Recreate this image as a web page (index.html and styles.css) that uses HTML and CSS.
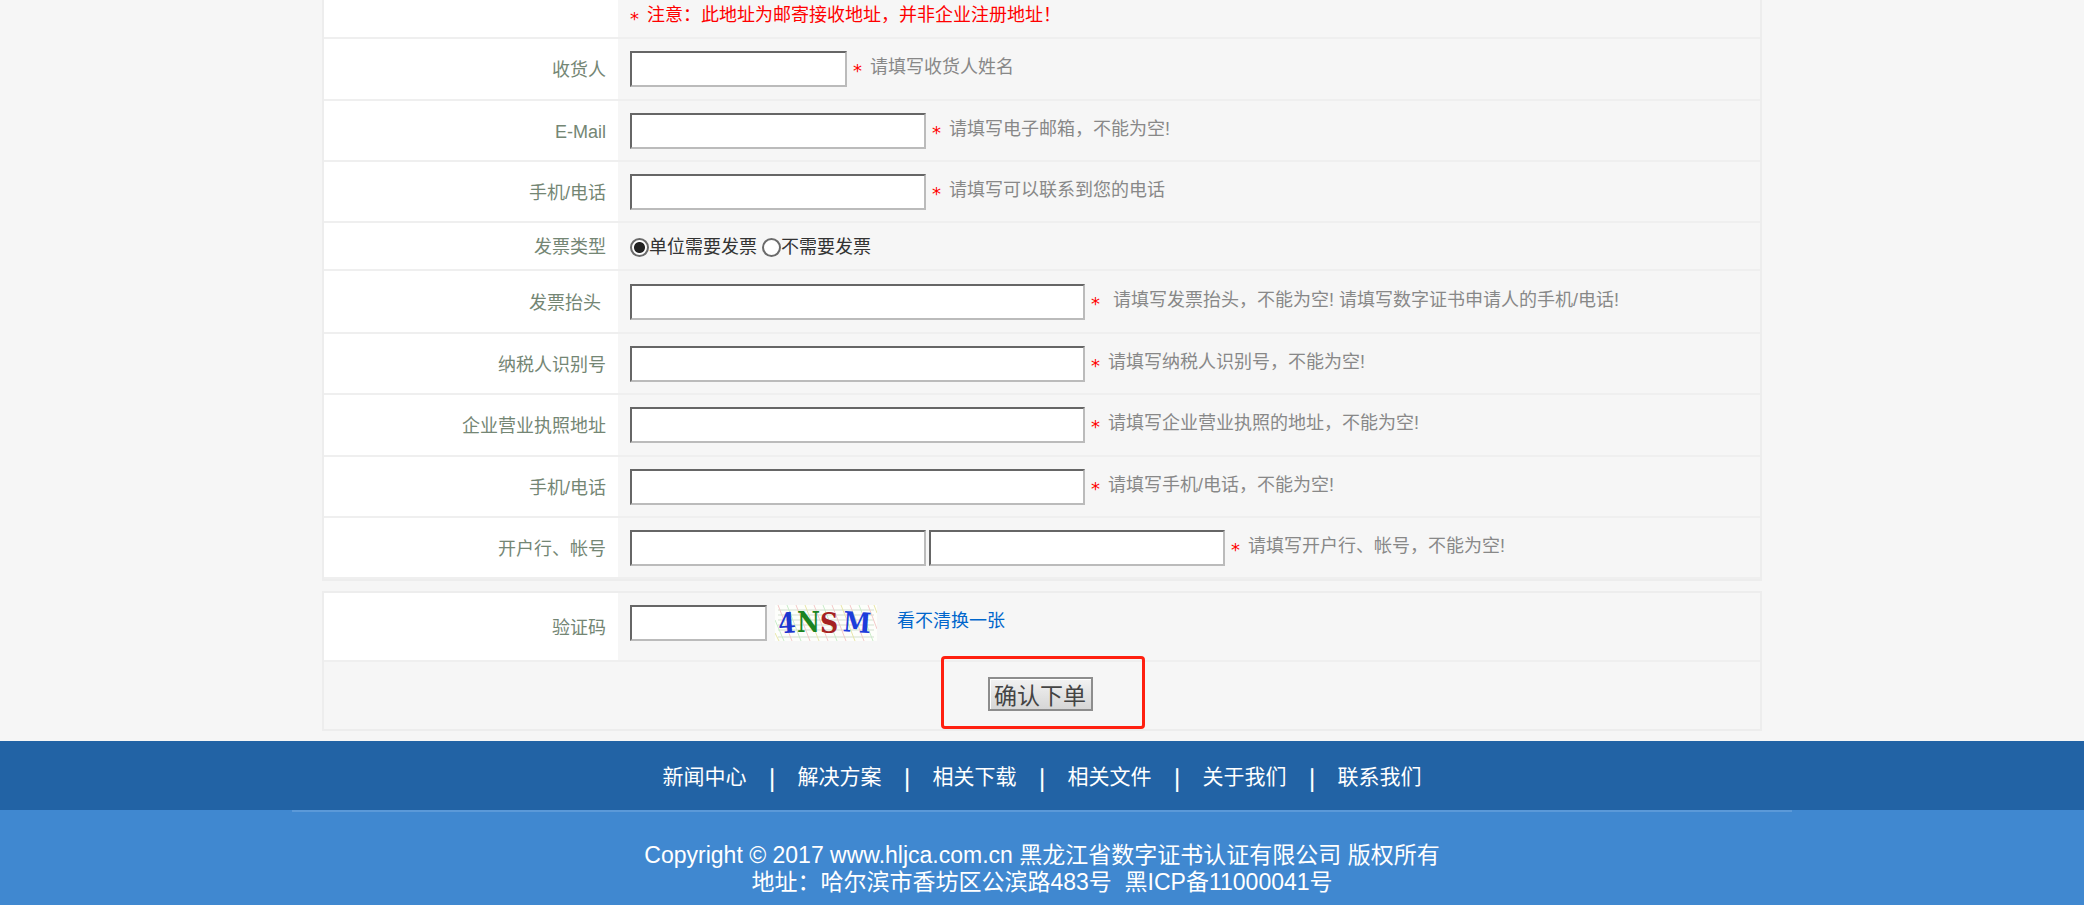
FILE: index.html
```
<!DOCTYPE html>
<html lang="zh-CN">
  <head>
    <title>确认下单</title>
    <meta charset="UTF-8" />
    <link rel="stylesheet" href="styles.css">
  </head>
  <body>
    <form class="order">
      <table class="panel">
        <tr class="notice-row">
          <th></th>
          <td><p class="notice"><span class="star">*</span>注意：此地址为邮寄接收地址，并非企业注册地址！</p></td>
        </tr>
        <tr class="tall">
          <th><label for="receiver">收货人</label></th>
          <td>
            <div class="field">
              <input type="text" id="receiver" class="text short">
              <span class="hint"><span class="star">*</span>请填写收货人姓名</span>
            </div>
          </td>
        </tr>
        <tr>
          <th><label for="email">E-Mail</label></th>
          <td>
            <div class="field">
              <input type="text" id="email" class="text medium">
              <span class="hint"><span class="star">*</span>请填写电子邮箱，不能为空!</span>
            </div>
          </td>
        </tr>
        <tr>
          <th><label for="phone">手机/电话</label></th>
          <td>
            <div class="field">
              <input type="text" id="phone" class="text medium">
              <span class="hint"><span class="star">*</span>请填写可以联系到您的电话</span>
            </div>
          </td>
        </tr>
        <tr class="type-row">
          <th>发票类型</th>
          <td>
            <div class="choices">
              <label><input type="radio" name="invoice" checked>单位需要发票</label>
              <label><input type="radio" name="invoice">不需要发票</label>
            </div>
          </td>
        </tr>
        <tr class="title-row">
          <th><label for="title">发票抬头</label>&nbsp;</th>
          <td>
            <div class="field">
              <input type="text" id="title" class="text long">
              <span class="hint"><span class="star">*</span>&nbsp;请填写发票抬头，不能为空! 请填写数字证书申请人的手机/电话!</span>
            </div>
          </td>
        </tr>
        <tr>
          <th><label for="taxno">纳税人识别号</label></th>
          <td>
            <div class="field">
              <input type="text" id="taxno" class="text long">
              <span class="hint"><span class="star">*</span>请填写纳税人识别号，不能为空!</span>
            </div>
          </td>
        </tr>
        <tr class="tall">
          <th><label for="address">企业营业执照地址</label></th>
          <td>
            <div class="field">
              <input type="text" id="address" class="text long">
              <span class="hint"><span class="star">*</span>请填写企业营业执照的地址，不能为空!</span>
            </div>
          </td>
        </tr>
        <tr>
          <th><label for="tel">手机/电话</label></th>
          <td>
            <div class="field">
              <input type="text" id="tel" class="text long">
              <span class="hint"><span class="star">*</span>请填写手机/电话，不能为空!</span>
            </div>
          </td>
        </tr>
        <tr>
          <th><label for="bank">开户行、帐号</label></th>
          <td>
            <div class="field">
              <input type="text" id="bank" class="text medium">
              <input type="text" class="text medium" aria-label="帐号">
              <span class="hint"><span class="star">*</span>请填写开户行、帐号，不能为空!</span>
            </div>
          </td>
        </tr>
      </table>

      <table class="panel check">
        <tr class="code-row">
          <th><label for="code">验证码</label></th>
          <td>
            <div class="field">
              <input type="text" id="code" class="text tiny">
              <svg class="captcha" width="102" height="36" viewBox="0 0 102 36">
                <rect width="102" height="36" fill="#fdfefb" />
                <path d="M3 5H99M3 10H99M3 15H99M3 20H99M3 25H99M3 32H99" stroke="#d3dfcf" />
                <path d="M3 0l14 36M21 0l14 36M39 0l14 36M57 0l14 36M75 0l14 36M93 0l9 24" stroke="#f3c9c9" />
                <path d="M12 0l14 36M48 0l14 36M84 0l14 36M0 15l9 21" stroke="#c9ecc9" />
                <path d="M30 0l14 36M66 0l14 36M0 28l4 8M99 0l3 8" stroke="#e8e6a8" />
                <text x="3" y="28" fill="#1c35cf" transform="rotate(-4 12 18)">4</text>
                <text x="22" y="27" fill="#1c8420">N</text>
                <text x="45" y="28" fill="#a52222">S</text>
                <text x="68" y="27" fill="#1c3ddb" transform="rotate(4 80 18)">M</text>
              </svg>
              <a href="#" class="refresh">看不清换一张</a>
            </div>
          </td>
        </tr>
        <tr class="submit-row">
          <td colspan="2">
            <div class="submit-box">
              <button type="submit" class="submit">确认下单</button>
              <span class="mark"></span>
            </div>
          </td>
        </tr>
      </table>
    </form>

    <footer>
      <nav class="links">
        <a href="#">新闻中心</a>
        <a href="#">解决方案</a>
        <a href="#">相关下载</a>
        <a href="#">相关文件</a>
        <a href="#">关于我们</a>
        <a href="#">联系我们</a>
      </nav>
      <div class="copy">
        <p>Copyright © 2017 www.hljca.com.cn 黑龙江省数字证书认证有限公司 版权所有<br>
        地址：哈尔滨市香坊区公滨路483号&nbsp; 黑ICP备11000041号</p>
      </div>
    </footer>
  </body>
</html>
```

FILE: styles.css
```
* {
  box-sizing: border-box;
}

body {
  margin: 0;
  background: #f6f6f6;
  color: #333;
  font: 18px/24px "Liberation Sans", "Noto Sans CJK SC", sans-serif;
}

p {
  margin: 0;
}

.order {
  max-width: 1440px;
  margin: 0 auto;
  padding-bottom: 10px;
}

/* form tables */
.panel {
  width: 100%;
  border: 2px solid #ededed;
  border-top: 0;
  border-spacing: 0;
}

.panel.check {
  margin-top: 10px;
  border-top: 2px solid #ededed;
}

.panel tr {
  height: 61px;
}

.panel .tall {
  height: 62px;
}

.panel .title-row {
  height: 63px;
}

.panel .notice-row {
  height: 39px;
}

.panel .type-row {
  height: 48px;
}

.panel .code-row {
  height: 69px;
}

.panel .submit-row {
  height: 67px;
}

.panel th,
.panel td {
  padding: 0 12px;
  border-bottom: 2px solid #efefef;
}

.panel th {
  width: 294px;
  padding-top: 2px;
  background: #fff;
  color: #748674;
  font-weight: normal;
  text-align: right;
}

.check tr:last-child td {
  border-bottom: 0;
}

.notice {
  padding-bottom: 6px;
  color: #f00;
}

.field {
  display: flex;
  align-items: center;
  gap: 3px;
}

.text {
  height: 36px;
  padding: 0 6px;
  border: 2px solid #666;
  border-right-color: #bbb;
  border-bottom-color: #bbb;
  background: #fff;
  font: inherit;
}

.tiny { width: 137px; }
.short { width: 217px; }
.medium { width: 296px; }
.long { width: 455px; }

.hint {
  padding-bottom: 3px;
  padding-left: 3px;
  color: #888;
}

.star {
  display: inline-block;
  width: 17px;
  color: #f00;
  font-family: "DejaVu Sans", sans-serif;
  line-height: 18px;
  vertical-align: -4px;
}

.choices {
  display: flex;
  gap: 5px;
  padding-top: 2px;
}

.choices label {
  display: flex;
  align-items: center;
}

.choices input {
  width: 19px;
  height: 19px;
  margin: 0;
  appearance: none;
  border: 2px solid #6b6b6b;
  border-radius: 50%;
  background: #fff;
}

.choices input:checked {
  background: radial-gradient(circle, #222 5px, #fff 6px);
}

.code-row .field {
  padding-bottom: 8px;
}

.captcha {
  margin-left: 5px;
  font: bold 28px "DejaVu Serif Condensed", "Liberation Serif", serif;
}

.refresh {
  padding-bottom: 4px;
  margin-left: 17px;
  color: #06c;
  text-decoration: none;
}

.submit-box {
  display: flex;
  justify-content: center;
  position: relative;
  padding: 0 4px 4px 0;
}

.submit {
  width: 105px;
  height: 34px;
  padding: 0;
  border: 2px solid #8d8d8d;
  background: linear-gradient(#f2f2f2, #d6d6d6);
  box-shadow: inset 1px 1px #fff;
  color: #444;
  font: 23px/28px "Noto Sans CJK SC", sans-serif;
}

/* red frame over the submit button */
.mark {
  position: absolute;
  top: -21px;
  left: 50%;
  width: 204px;
  height: 73px;
  margin-left: -101px;
  border: 3px solid #ff2010;
  border-radius: 4px;
  pointer-events: none;
}

/* footer */
footer {
  background: #4088d0;
  color: #fff;
}

.links {
  display: flex;
  justify-content: center;
  padding: 24px 0 21px;
  background: #2263a5;
}

.links a {
  display: flex;
  align-items: center;
  color: #fff;
  font-size: 21px;
  text-decoration: none;
}

.links a + a::before {
  content: "|";
  width: 51px;
  font-family: "Noto Sans CJK SC", sans-serif;
  font-weight: bold;
  text-align: center;
}

.copy {
  max-width: 1500px;
  margin: 0 auto;
  padding: 30px 0 10px;
  border-top: 2px solid #5b99d8;
  font-size: 23px;
  line-height: 27px;
  text-align: center;
}
```
